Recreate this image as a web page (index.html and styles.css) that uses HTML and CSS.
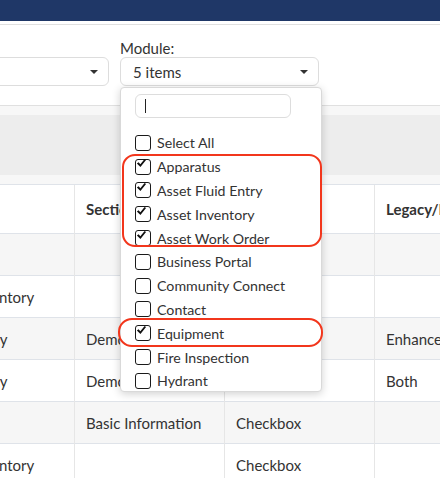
FILE: index.html
```html
<!DOCTYPE html>
<html lang="en">
<head>
  <meta charset="UTF-8">
  <title>Field Report</title>
  <link rel="stylesheet" href="styles.css">
</head>
<body>
  <div class="navbar"></div>
  <div class="filters">
    <div class="filter filter-form">
      <label>Form:</label>
      <div class="select"><span></span><i class="caret"></i></div>
    </div>
    <div class="filter filter-module">
      <label>Module:</label>
      <div class="select"><span>5 items</span><i class="caret"></i></div>
      <div class="dropdown">
        <div class="search"><span class="cursor"></span></div>
        <ul class="options">
          <li><span class="box"></span>Select All</li>
          <li><span class="box on"><svg viewBox="0 0 16 16"><path d="M1.2 7.4l2.2-1.8 2.4 2.7 5.7-7.1 1.9 1.5-7.5 9.2z"/></svg></span>Apparatus</li>
          <li><span class="box on"><svg viewBox="0 0 16 16"><path d="M1.2 7.4l2.2-1.8 2.4 2.7 5.7-7.1 1.9 1.5-7.5 9.2z"/></svg></span>Asset Fluid Entry</li>
          <li><span class="box on"><svg viewBox="0 0 16 16"><path d="M1.2 7.4l2.2-1.8 2.4 2.7 5.7-7.1 1.9 1.5-7.5 9.2z"/></svg></span>Asset Inventory</li>
          <li><span class="box on"><svg viewBox="0 0 16 16"><path d="M1.2 7.4l2.2-1.8 2.4 2.7 5.7-7.1 1.9 1.5-7.5 9.2z"/></svg></span>Asset Work Order</li>
          <li><span class="box"></span>Business Portal</li>
          <li><span class="box"></span>Community Connect</li>
          <li><span class="box"></span>Contact</li>
          <li><span class="box on"><svg viewBox="0 0 16 16"><path d="M1.2 7.4l2.2-1.8 2.4 2.7 5.7-7.1 1.9 1.5-7.5 9.2z"/></svg></span>Equipment</li>
          <li><span class="box"></span>Fire Inspection</li>
          <li><span class="box"></span>Hydrant</li>
        </ul>
        <div class="mark mark-group"></div>
        <div class="mark mark-single"></div>
      </div>
    </div>
  </div>

  <div class="panel">
    <div class="toolbar"></div>
  </div>

  <table class="grid">
    <colgroup>
      <col class="col col-first"><col class="col"><col class="col"><col class="col">
    </colgroup>
    <thead>
      <tr>
        <th>Module</th>
        <th>Section</th>
        <th>Field Type</th>
        <th>Legacy/Enhanced</th>
      </tr>
    </thead>
    <tbody>
      <tr><td></td><td></td><td></td><td></td></tr>
      <tr><td>Asset Inventory</td><td></td><td></td><td></td></tr>
      <tr><td>Community</td><td>Demographics</td><td>Text</td><td>Enhanced</td></tr>
      <tr><td>Community</td><td>Demographics</td><td>Text</td><td>Both</td></tr>
      <tr><td></td><td>Basic Information</td><td>Checkbox</td><td></td></tr>
      <tr><td>Asset Inventory</td><td></td><td>Checkbox</td><td></td></tr>
    </tbody>
  </table>
</body>
</html>
```

FILE: styles.css
```css
:root {
  --navy: #1f3767;
  --text: #333333;
  --border: #dddddd;
  --row-line: #dfe3e9;
  --col-line: #e6e6e6;
  --stripe: #f6f6f6;
  --mark: #f2361c;
}

body {
  margin: 0;
  font-family: 'Lato', 'Open Sans', sans-serif;
  color: var(--text);
  background: #ffffff;
  overflow: hidden;
}

.navbar {
  height: 21px;
  background: var(--navy);
  border-bottom: 3px solid #ffffff;
}

.filters {
  display: flex;
  gap: 11px;
  height: 81px;
  padding-top: 14px;
  box-sizing: border-box;
  border-top: 1px solid #e0e0e0;
}

.filter {
  position: relative;
  display: flex;
  flex-direction: column;
}

.filter label {
  font-size: 15px;
  line-height: 18px;
  height: 18px;
}

.filter-form {
  margin-left: -91px;
}

.filter-form .select {
  width: 200px;
}

.select {
  display: flex;
  align-items: center;
  justify-content: space-between;
  width: 199px;
  height: 29px;
  box-sizing: border-box;
  border: 1px solid var(--border);
  border-radius: 6px;
  padding: 0 10px 0 12px;
  font-size: 15px;
  background: #ffffff;
}

.caret {
  width: 0;
  height: 0;
  border-left: 4px solid transparent;
  border-right: 4px solid transparent;
  border-top: 4px solid var(--text);
}

/* dropdown list */
.dropdown {
  position: absolute;
  top: 48px;
  left: 0;
  z-index: 5;
  width: 202px;
  height: 305px;
  box-sizing: border-box;
  background: #ffffff;
  border: 1px solid #d9d9d9;
  border-radius: 4px;
  box-shadow: 0 2px 8px rgba(0, 0, 0, 0.18);
}

.search {
  margin: 6px 0 0 14px;
  width: 156px;
  height: 24px;
  box-sizing: border-box;
  border: 1px solid var(--border);
  border-radius: 6px;
  display: flex;
  align-items: center;
  padding-left: 9px;
}

.cursor {
  width: 1px;
  height: 14px;
  background: #222222;
}

.options {
  list-style: none;
  margin: 13px 0 0;
  padding: 0 0 0 14px;
}

.options li {
  display: flex;
  align-items: center;
  gap: 6px;
  height: 23.8px;
  font-size: 14.2px;
  white-space: nowrap;
}

.box {
  position: relative;
  width: 16px;
  height: 16px;
  box-sizing: border-box;
  border: 1.5px solid #1a1a1a;
  border-radius: 3px;
  flex: none;
}

.box svg {
  position: absolute;
  left: -0.5px;
  top: -1.5px;
  width: 12px;
  height: 12px;
  fill: #111111;
}

.mark {
  position: absolute;
  border: 2.5px solid var(--mark);
  pointer-events: none;
}

.mark-group {
  left: 1px;
  top: 66px;
  width: 200px;
  height: 93px;
  box-sizing: border-box;
  border-radius: 13px;
}

.mark-single {
  left: -3px;
  top: 230px;
  width: 205px;
  height: 29px;
  box-sizing: border-box;
  border-radius: 14px;
}

/* table area */
.panel {
  border-top: 1px solid #e0e0e0;
  background: #f7f7f7;
  padding: 9px 0;
}

.toolbar {
  height: 60px;
  background: #ededed;
}

.grid {
  width: 605px;
  margin-left: -81px;
  border-collapse: collapse;
  font-size: 15px;
  table-layout: fixed;
}

.col {
  width: 150px;
}

.col-first {
  width: 155px;
}

.grid th,
.grid td {
  text-align: left;
  padding: 0 11px;
  border-top: 1px solid var(--row-line);
  border-left: 1px solid var(--col-line);
  white-space: nowrap;
  overflow: hidden;
}

.grid th {
  height: 48px;
  font-weight: 700;
}

.grid td {
  height: 41px;
}

.grid tbody tr:nth-child(odd) td {
  background: var(--stripe);
}
```
